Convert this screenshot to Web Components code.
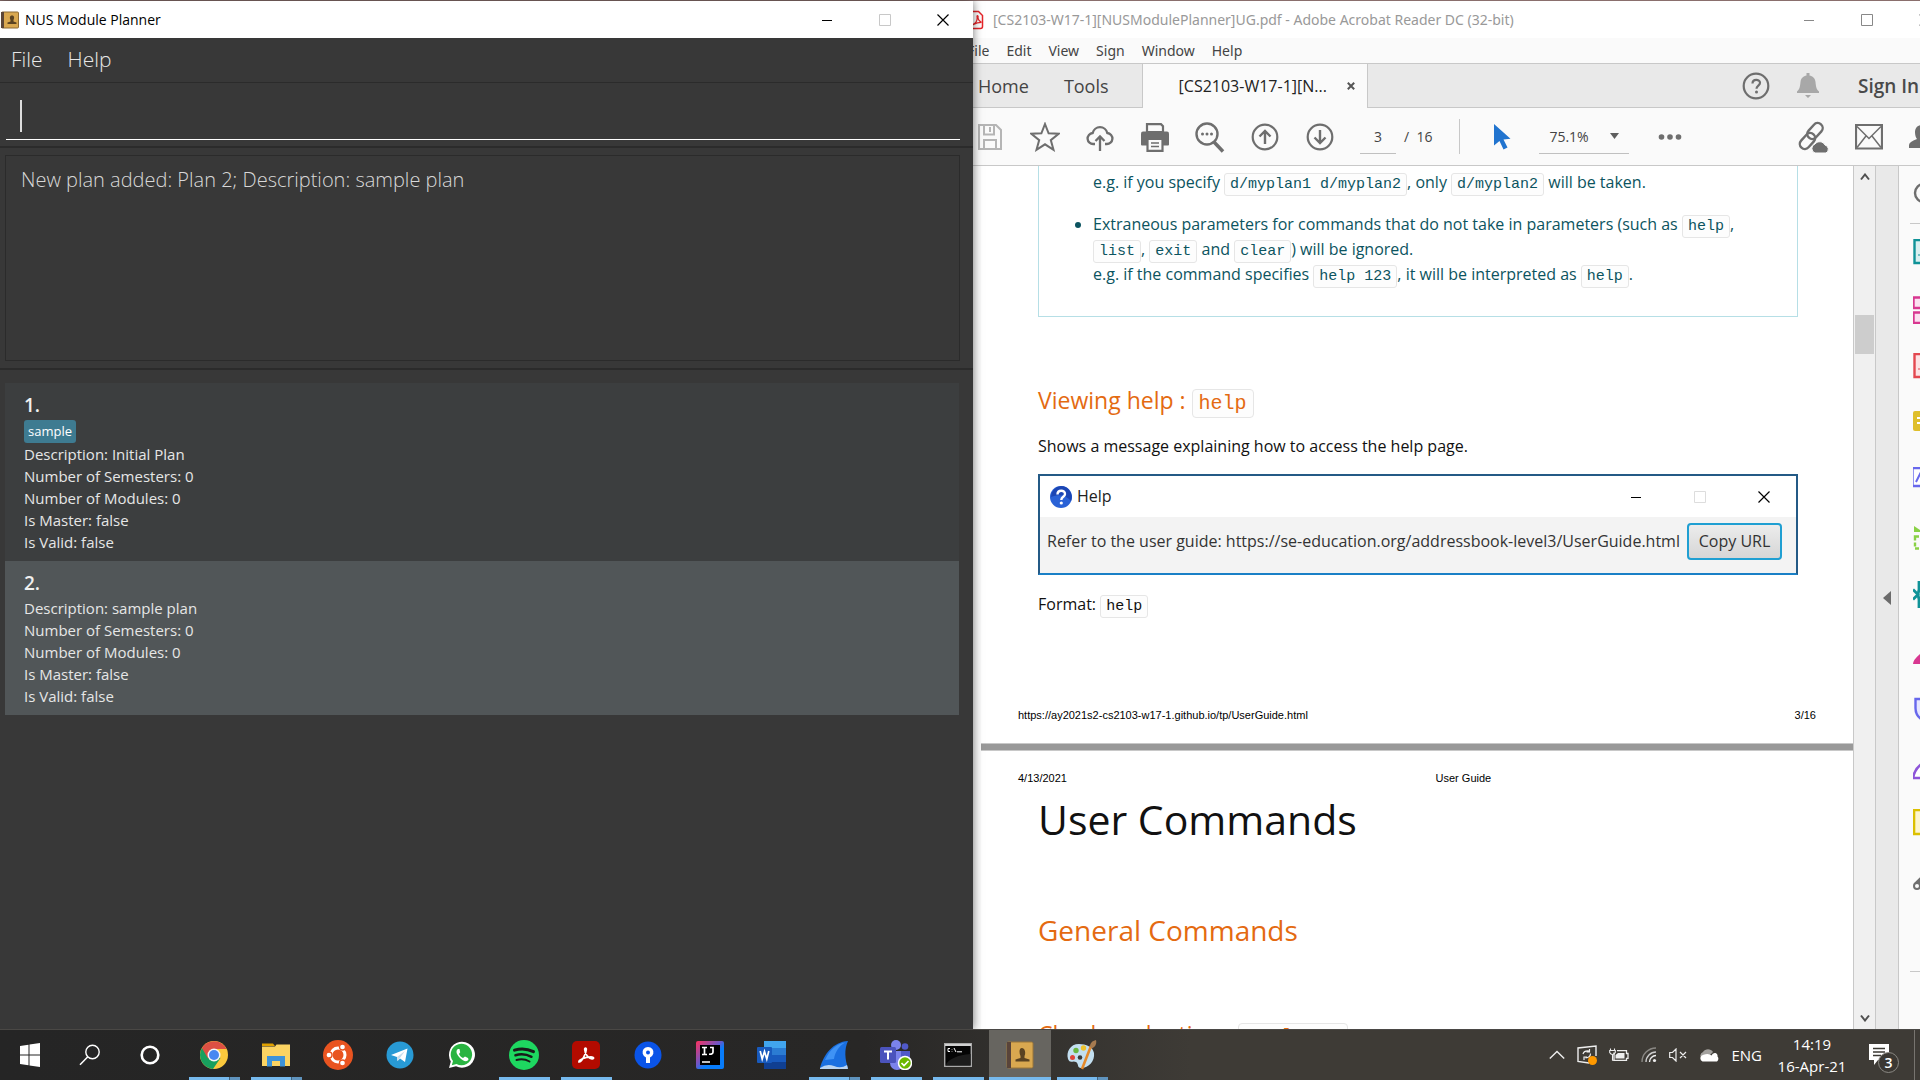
<!DOCTYPE html>
<html lang="en">
<head>
<meta charset="utf-8">
<title>NUS Module Planner</title>
<style>
html,body{margin:0;height:100%;overflow:hidden;background:#383838}
body{font-family:"Open Sans","Noto Sans",sans-serif;font-size:14px}
</style>
</head>
<body>
<desktop-shell>
  <planner-window slot="left">
    <plan-card>
      <span slot="id">1.</span><span slot="tag">sample</span>
      <span>Description: Initial Plan</span><span>Number of Semesters: 0</span><span>Number of Modules: 0</span><span>Is Master: false</span><span>Is Valid: false</span>
    </plan-card>
    <plan-card selected>
      <span slot="id">2.</span>
      <span>Description: sample plan</span><span>Number of Semesters: 0</span><span>Number of Modules: 0</span><span>Is Master: false</span><span>Is Valid: false</span>
    </plan-card>
  </planner-window>
  <pdf-window slot="right"></pdf-window>
  <task-bar slot="bottom"></task-bar>
</desktop-shell>

<script>
const ICONS = {
  book:[18,18,`<rect x=".5" y="1" width="17" height="16" rx="1" fill="#d9a850" stroke="#8c6a35"/><rect y="1" width="3" height="16" fill="#5b4638"/><path d="M6.500 13v-1.500l3-1V9C8.500 7 8.500 4.500 11 4.500S13.500 7 12.500 9v1.500l3 1V13z" fill="#5a4322"/>`],
  min:[12,12,`<path d="M1 6.500h10" stroke="currentColor"/>`],
  max:[12,12,`<path d="M.5.5h11v11H.5z" fill="none" stroke="currentColor"/>`],
  close:[12,12,`<path d="M.5.5l11 11M11.500.5l-11 11" stroke="currentColor" stroke-width="1.200"/>`],
  tabx:[8,8,`<path d="M.8.800l6.400 6.400M7.200.800L.8 7.200" stroke="#555" stroke-width="2"/>`],
  pdf:[20,20,`<path d="M3.500 1.500h10l4 4v11a2 2 0 0 1-2 2h-12a2 2 0 0 1-2-2v-13a2 2 0 0 1 2-2z" fill="#fff" stroke="#e5252a" stroke-width="1.500"/><path d="M8 14.500c3-1.500 4.500-5 4-8 0-1.500 1.500-1 1 .8 0 2 1.500 4 3.500 5-3 0-6 1-8.500 2.400z" fill="none" stroke="#e5252a" stroke-width="1.200"/>`],
  save:[26,28,`<path d="M2 2h17l5 5v19H2z" fill="none" stroke="#b5b5b5" stroke-width="2"/><path d="M7 2v9.500h10V2M7 26v-9h12v9" fill="none" stroke="#b5b5b5" stroke-width="2"/><path d="M13 4v5" stroke="#b5b5b5" stroke-width="2"/>`],
  star:[30,30,`<path d="M15 2l3.600 9.300 10 .5-7.800 6.300 2.700 9.700L15 22.300l-8.500 5.500 2.700-9.700L1.400 11.800l10-.5z" fill="none" stroke="#6e6e6e" stroke-width="2"/>`],
  upcloud:[28,28,`<path d="M9 21H7.500a5.500 5.500 0 0 1-.8-11 7.500 7.500 0 0 1 14.600 0 5.500 5.500 0 0 1-.8 11H19" fill="none" stroke="#6e6e6e" stroke-width="2.300"/><path d="M14 28V14M9.500 18l4.500-4.500 4.500 4.500" fill="none" stroke="#6e6e6e" stroke-width="2.300"/>`],
  print:[28,30,`<path d="M6 2.200h14l2 2V10H6z" fill="#fafafa" stroke="#6e6e6e" stroke-width="2.200"/><path d="M2 9.500h24q2 0 2 2v11q0 1-1 1H1q-1 0-1-1v-11q0-2 2-2z" fill="#6e6e6e"/><path d="M6.500 17h15v11.800h-15z" fill="#fafafa" stroke="#6e6e6e" stroke-width="2.200"/><path d="M10 21h8M10 24.500h8" stroke="#6e6e6e" stroke-width="1.500"/>`],
  find:[30,32,`<circle cx="12" cy="13" r="10.500" fill="none" stroke="#6e6e6e" stroke-width="2.400"/><path d="M19 21l9 9.500" stroke="#6e6e6e" stroke-width="3.500"/><g fill="#6e6e6e"><circle cx="7.500" cy="13" r="1.500"/><circle cx="12" cy="13" r="1.500"/><circle cx="16.500" cy="13" r="1.500"/></g>`],
  up:[28,28,`<circle cx="14" cy="14" r="12.300" fill="none" stroke="#6e6e6e" stroke-width="2.200"/><path d="M14 21V8M8.500 13.500L14 8l5.500 5.500" fill="none" stroke="#6e6e6e" stroke-width="2.400"/>`],
  down:[28,28,`<circle cx="14" cy="14" r="12.300" fill="none" stroke="#6e6e6e" stroke-width="2.200"/><path d="M14 7v13M8.500 14.500L14 20l5.500-5.500" fill="none" stroke="#6e6e6e" stroke-width="2.400"/>`],
  arrow:[18,28,`<path d="M1 1v21.500l5.500-4.500 4 8.500 4-2-4-8 7-.8z" fill="#2174cf"/>`],
  caret:[9,6,`<path d="M0 0h9L4.500 6z" fill="#5e5e5e"/>`],
  dots:[24,8,`<g fill="#6e6e6e"><circle cx="3.500" cy="4" r="2.800"/><circle cx="12" cy="4" r="2.800"/><circle cx="20.500" cy="4" r="2.800"/></g>`],
  link:[32,32,`<g fill="none" stroke="#6e6e6e" stroke-width="2.400"><rect x="-5" y="-9" width="10" height="18" rx="5" transform="translate(18 10) rotate(42)"/><rect x="-5" y="-9" width="10" height="18" rx="5" transform="translate(10.500 20) rotate(42)"/></g><path d="M18 32a4.800 4.800 0 0 1 0-9 6 6 0 0 1 10 1 4.300 4.300 0 0 1 1 8z" fill="#6e6e6e" stroke="#fafafa"/>`],
  mail:[28,26,`<path d="M1 1h26v23.500H1z" fill="none" stroke="#6e6e6e" stroke-width="2.200"/><path d="M2 2.500l12 12 12-12M2 23.500l9-11.500M26 23.500L17 12" fill="none" stroke="#6e6e6e" stroke-width="1.500"/>`],
  person:[26,26,`<path d="M0 24v-3q0-3 8-6c-3-4-3.500-14 5-14s8 10 5 14q8 3 8 6v3z" fill="#6e6e6e"/>`],
  q:[28,28,`<circle cx="14" cy="14" r="12.300" fill="none" stroke="#6e6e6e" stroke-width="2.200"/><path d="M10.500 11.500c0-5 7.500-4.500 7.500-.7 0 3-3.500 2.700-3.500 6" fill="none" stroke="#6e6e6e" stroke-width="2.200"/><circle cx="14.500" cy="20" r="1.500" fill="#6e6e6e"/>`],
  bell:[24,26,`<path d="M1 21v-1.500C4 17 4 14 4.500 10 5 6 7.500 4 10.500 3.500V1h3v2.500c3 .5 5.500 2.500 6 6.500.5 4 .5 7 3.500 9.500V21z M9 23h6l-3 3z" fill="#a8a8a8"/>`],
  helpball:[24,24,`<circle cx="12" cy="12" r="11" fill="#2a62d6"/><path d="M12 1a11 11 0 0 1 10 15c-5-6-12-7-20-4A11 11 0 0 1 12 1z" fill="#1b46b4"/><path d="M8.500 9.500c0-5 7.500-4.800 7.500-.6 0 3-3.700 2.800-3.700 6" fill="none" stroke="#fff" stroke-width="2.400"/><circle cx="12.300" cy="18" r="1.600" fill="#fff"/>`],
  chevup:[10,8,`<path d="M1 6.500l4-5 4 5" fill="none" stroke="#505050" stroke-width="2"/>`],
  chevdown:[10,8,`<path d="M1 1.500l4 5 4-5" fill="none" stroke="#505050" stroke-width="2"/>`],
  tri:[8,14,`<path d="M8 0v14L0 7z" fill="#6b6b6b"/>`],
  /* tool rail */
  r0:[28,28,`<circle cx="11" cy="12" r="9" fill="none" stroke="#6e6e6e" stroke-width="2.400"/>`],
  r1:[28,28,`<path d="M1.500 1h20v23h-20z" fill="#d9f0f0" stroke="#0f9297" stroke-width="2.400"/><path d="M5 16h9" stroke="#0f9297"/>`],
  r2:[28,28,`<path d="M.5 1.500h20v10.500H.5zM.5 16.500h20V27H.5z" fill="#fbe0f0" stroke="#d83790" stroke-width="2.400"/>`],
  r3:[28,28,`<path d="M1.500 1h20v23h-20z" fill="#fde3e5" stroke="#e34850" stroke-width="2.400"/><path d="M5 16h9" stroke="#e34850"/>`],
  r4:[28,28,`<rect x="0" y="1" width="24" height="20" rx="2" fill="#dfbf2b"/><path d="M4 8h12M4 13h12" stroke="#fff" stroke-width="2"/>`],
  r5:[28,28,`<path d="M-.5 1h24v18h-24z" fill="#fff" stroke="#6767ec" stroke-width="2.400"/><path d="M3 15l4-8 4 6" fill="none" stroke="#6767ec" stroke-width="2"/>`],
  r6:[28,28,`<path d="M1 2l9 6H1z" fill="#89d145"/><path d="M2 12.500h20v12H2z" fill="none" stroke="#89d145" stroke-width="2.400" stroke-dasharray="4 2"/>`],
  r7:[28,28,`<path d="M12 1.500H6v7l-1 5 1 5v7h6M0 8.500l5 5-5 5" fill="none" stroke="#0f9297" stroke-width="2.800"/>`],
  r8:[28,28,`<path d="M0 26q0-4 7-10l10-4v14z" fill="#d83790"/>`],
  r9:[28,28,`<path d="M2.500 4h9V26Q2.500 22 2.500 13z" fill="#e6e6ff" stroke="#6767ec" stroke-width="2.400"/>`],
  r10:[28,28,`<path d="M0 26Q2 15 12 10V26z" fill="#fff" stroke="#8e55d9" stroke-width="2.600"/>`],
  r11:[28,28,`<path d="M1 1h20v24H1z" fill="#fdf6cf" stroke="#dcc000" stroke-width="2.600"/>`],
  r12:[28,28,`<path d="M10 11L3 18" stroke="#6e6e6e" stroke-width="4"/><circle cx="4" cy="20" r="3" fill="#fafafa" stroke="#6e6e6e" stroke-width="2"/>`],
  /* taskbar */
  win:[20,24,`<path d="M0 3l8.500-1.200v9.700H0zM9.500 1.600L20 0v11.500H9.500zM0 12.500h8.500v9.700L0 21zM9.500 12.500H20V24L9.500 22.400z" fill="#fff"/>`],
  search:[22,22,`<circle cx="13.500" cy="8" r="6.700" fill="none" stroke="#fff" stroke-width="1.400"/><path d="M8.800 12.800L1 20.800" stroke="#fff" stroke-width="1.500"/>`],
  cortana:[20,20,`<circle cx="10" cy="10" r="8.300" fill="none" stroke="#fff" stroke-width="2.600"/>`],
  chrome:[28,28,`<circle cx="14" cy="14" r="14" fill="#fbc93d"/><path d="M14 14L1.900 7A14 14 0 0 0 13 28l7.500-11z" fill="#18a05e"/><path d="M1.900 7A14 14 0 0 1 26.500 8H14L8 17.500z" fill="#dd5043"/><circle cx="14" cy="14" r="6.500" fill="#f5f5f5"/><circle cx="14" cy="14" r="5" fill="#4688f1"/>`],
  folder:[28,26,`<path d="M0 1.500h11l2 2.500H0z" fill="#e0a100"/><path d="M0 4.500h13l1.500-2H28V24H0z" fill="#fcd462"/><path d="M5 24.500V14h18v10.500h-5V19h-8v5.500z" fill="#3e93d8"/>`],
  ubuntu:[30,30,`<circle cx="15" cy="15" r="15" fill="#e95420"/><circle cx="15" cy="15" r="7" fill="none" stroke="#fff" stroke-width="3"/><g fill="#fff" stroke="#e95420" stroke-width="1.300"><circle cx="6" cy="15" r="3"/><circle cx="19.500" cy="7" r="3"/><circle cx="19.500" cy="23" r="3"/></g>`],
  telegram:[28,28,`<circle cx="14" cy="14" r="13.500" fill="#289ad5"/><path d="M5 14L21.500 7.500 19 21l-5-3.500-2.500 2.500-.5-4z" fill="#fff"/><path d="M11 16l8-6-5.500 7.500-2 2.500z" fill="#c7dceb"/>`],
  whatsapp:[28,28,`<path d="M1 27l1.800-6.600A13 13 0 1 1 8 25.300z" fill="#fff"/><path d="M3.800 24.300l1.200-4.200A10.700 10.700 0 1 1 8.500 23z" fill="#29b441"/><path d="M10 8c-3 2-1 6 2 9s7 4.500 8.500 1.500l-.5-1.500-3-1.500-2 1.500c-2-1-3.500-2.500-4-4l1.200-1.700L11.500 8z" fill="#fff"/>`],
  spotify:[30,30,`<circle cx="15" cy="15" r="15" fill="#1ed760"/><g fill="none" stroke="#191919" stroke-linecap="round"><path d="M5.500 10.200c6-2 13-1.500 19 1.500" stroke-width="3"/><path d="M6.500 15.300c5-1.500 11-1 16 1.500" stroke-width="2.500"/><path d="M7.500 20c4.500-1.200 9-.8 13 1.500" stroke-width="2"/></g>`],
  acrobat:[28,28,`<rect width="28" height="28" rx="5" fill="#b30b00"/><path d="M7 21c-1-2 6-5 12-5.200 3 0 3.500 2.200 1 2-3.500-.5-7-4.500-7.300-9.300-.2-2 1.800-2 1.600 0C14 13 10 20.500 7 21z" fill="none" stroke="#fff" stroke-width="1.700"/>`],
  source:[28,28,`<circle cx="14" cy="14" r="13.500" fill="#0a54e8"/><path d="M12 22v-5.500a5.500 5.500 0 1 1 4 0V22z" fill="#fff"/><circle cx="14" cy="11.500" r="2" fill="#0a54e8"/>`],
  ij:[28,28,`<defs><linearGradient id="g" x2="1" y2="1"><stop offset="0" stop-color="#fe315d"/><stop offset=".45" stop-color="#6b57c8"/><stop offset=".6" stop-color="#087cfa"/></linearGradient></defs><rect width="28" height="28" rx="2" fill="url(#g)"/><rect x="4" y="4" width="20" height="20"/><path d="M6 6.500h5M8.500 6.500v7M6 13.500h5M14 6.500h3V11q0 2.500-4 2.200M6 21h8" fill="none" stroke="#fff" stroke-width="1.700"/>`],
  word:[30,30,`<path d="M7 1h22v7H7z" fill="#41a5ee"/><path d="M7 8h22v7H7z" fill="#2b7cd3"/><path d="M7 15h22v7H7z" fill="#185abd"/><path d="M7 22h22v7H7z" fill="#103f91"/><rect y="7" width="15" height="16" rx="1" fill="#185abd"/><path d="M3.200 11l2 8 2.300-7.500L9.800 19l2-8" fill="none" stroke="#fff" stroke-width="1.700"/>`],
  shark:[30,30,`<path d="M1 28C5 14 14 2 29 1c-4 8-3 19 0 27z" fill="#1a6fe0"/><path d="M6 20C11 9 18 4 26 2.500 20 6 16 12 15 19z" fill="#3f93f5"/><path d="M1 28q7-5 14-2t13-1l1 4H1z" fill="#b9d4f2"/>`],
  teams:[32,30,`<circle cx="16" cy="5" r="5" fill="#7b83eb"/><circle cx="25" cy="6.500" r="3.300" fill="#5059c9"/><path d="M10 11h14v12a7 7 0 0 1-14 0z" fill="#7b83eb"/><path d="M21 11h9v9a5 5 0 0 1-9 3z" fill="#5059c9"/><rect y="7" width="16" height="16" rx="1.500" fill="#4b53bc"/><path d="M4 11.500h8M8 11.500v8" stroke="#fff" stroke-width="2"/><circle cx="25" cy="23" r="6.500" fill="#6bb700" stroke="#fff" stroke-width="1.500"/><path d="M21.500 23l2.500 2.500 4.500-4.500" fill="none" stroke="#fff" stroke-width="1.700"/>`],
  cmd:[28,24,`<path d="M.7.700h26.600v22.600H.7z" fill="#050505" stroke="#a9a9a9" stroke-width="1.400"/><path d="M1 1h26v2H1z" fill="#d0d0d0"/><path d="M6 5.500H4v3h2M8 6v.5M8 8v.5M10 5l2 4M13 8.800h5" fill="none" stroke="#fff"/><path d="M1.500 22.500C4 16 14 12 26.500 11v11.500z" fill="#1c1c1c"/>`],
  bookbig:[28,28,`<rect x="1" y="1" width="26" height="26" rx="1.500" fill="#d9a850" stroke="#9b7638"/><rect x="1" y="1" width="4" height="26" fill="#59443a"/><path d="M9.500 20.500v-2l5-1.500v-2C13 12 13 7 16 7s4 5 2.500 8v2l5 1.500v2z" fill="#5a4322"/>`],
  paint:[32,32,`<path d="M13 5C4 5 0 13 2 20c2 5 5 1 8 3s1 6 5 6c8 0 14-7 13-15-1-6-8-9-15-9z" fill="#c3dff0"/><circle cx="6.500" cy="18.500" r="2.500" fill="#e0433a"/><circle cx="10" cy="11.500" r="2.700" fill="#69b540"/><circle cx="17.500" cy="9" r="2.700" fill="#efc32d"/><circle cx="14" cy="18.500" r="2.300" fill="#3a3a3a"/><path d="M16 30l9-23" stroke="#e58a2b" stroke-width="2.600"/><path d="M24 8c0-4 2-6 6-7 1 4-1 7-4 8.500z" fill="#a57a50"/>`],
  traychev:[16,10,`<path d="M.8 8.500L8 1.500l7.200 7" fill="none" stroke="#eee" stroke-width="1.400"/>`],
  update:[20,20,`<path d="M12 18L1 16.500V3l18-2v10" fill="none" stroke="#eee" stroke-width="1.400"/><path d="M6 9q1-3.500 6-3M12.500 4v3h-3M13.500 8.500q0 4-5 4.500M7 15v-3h3" fill="none" stroke="#eee" stroke-width="1.200"/><circle cx="15.500" cy="15.500" r="4.500" fill="#f90"/>`],
  battery:[20,14,`<path d="M5 4.500V12.300h12.500v-2h1.500V5.500h-1.500V2.700H8" fill="none" stroke="#eee" stroke-width="1.300"/><path d="M9 5h6.500v5.500H6.500V7z" fill="#eee"/><path d="M1.500.5v2M5.500.5v2M.7 2.500h5.600v2q-1 2-2.800 2T.7 4.500zM3.500 6v6.300H5" fill="none" stroke="#eee" stroke-width="1.100"/>`],
  wifi:[16,16,`<g fill="none" stroke-width="1.400"><path d="M1 15A14 14 0 0 1 15 1" stroke="#8a8884"/><path d="M5 15A10 10 0 0 1 15 5" stroke="#ccc"/><path d="M8.500 15A6.500 6.500 0 0 1 15 8.500" stroke="#eee"/></g><circle cx="13.500" cy="13.500" r="1.600" fill="#eee"/>`],
  mute:[18,14,`<path d="M.7 4.500h2.800L7 1v12L3.500 9.500H.7zM11 4l6 6M17 4l-6 6" fill="none" stroke="#eee" stroke-width="1.200"/>`],
  cloud:[20,14,`<path d="M3 11a4 4 0 0 1 1-7 6 6 0 0 1 10 0l-7 7z" fill="#a3a19e"/><path d="M3.500 13.500a3.500 3.500 0 0 1 1-6.700q5-2 8 .7 1-3 4-2.500 2.500 1 2 3.500 2 2.500-.5 5z" fill="#fff"/>`],
  note:[20,22,`<path d="M0 0h20v16H9l-4 5v-5H0z" fill="#fff"/><path d="M4 4.500h12M4 8h12M4 11.500h8" stroke="#3b3833" stroke-width="1.300"/>`]
};

class UiIcon extends HTMLElement {
  connectedCallback() {
    if (this.shadowRoot) return;
    const [w, h, body] = ICONS[this.getAttribute('name')];
    this.attachShadow({mode:'open'}).innerHTML =
      `<style>:host{display:inline-block;flex:none;width:${w}px;height:${h}px}svg{display:block}</style>
       <svg width="${w}" height="${h}" viewBox="0 0 ${w} ${h}" aria-hidden="true">${body}</svg>`;
  }
}

function define(name, html, after) {
  const tpl = document.createElement('template');
  tpl.innerHTML = html;
  customElements.define(name, class extends HTMLElement {
    constructor() {
      super();
      this.attachShadow({mode:'open'}).append(tpl.content.cloneNode(true));
      if (after) after(this.shadowRoot, this);
    }
  });
}
const BTN = `button{font:inherit;color:inherit;background:none;border:0;margin:0;padding:0;display:flex;align-items:center;justify-content:center}*{box-sizing:border-box}`;

customElements.define('ui-icon', UiIcon);

define('desktop-shell', `<style>
:host{display:grid;height:100vh;grid-template:minmax(0,1fr) 51px / minmax(0,973fr) minmax(0,947fr);background:#8a6f6d}
::slotted([slot=left]){margin-top:1px;z-index:1}
::slotted([slot=right]){margin-top:1px}
::slotted([slot=bottom]){grid-column:1/-1;z-index:2}
</style><slot name="left"></slot><slot name="right"></slot><slot name="bottom"></slot>`);

define('window-buttons', `<style>${BTN}
:host{display:flex;color:#000;--off:#c8c8c8}
button{width:var(--step,58px);height:100%}
.off{color:var(--off)}
</style><button aria-label="Minimize"><ui-icon name="min"></ui-icon></button><button class="off" aria-label="Maximize"><ui-icon name="max"></ui-icon></button><button aria-label="Close"><ui-icon name="close"></ui-icon></button>`);

define('planner-window', `<style>${BTN}
:host{display:flex;flex-direction:column;background:#383838;box-shadow:0 0 9px rgba(0,0,0,.55);min-width:0}
header{display:flex;height:37px;background:#fff;align-items:center;padding:0 1px;color:#000}
h1{flex:1;margin:0 0 0 6px;font-size:14px;font-weight:400;line-height:20px}
window-buttons{height:100%}
nav{display:flex;height:45px;padding:0 11px;gap:25px;border-bottom:1px solid #2b2b2b;color:#e8e8e8;font-weight:300;font-size:21px;line-height:40px}
nav button{height:42px}
.cmd{padding:13px 13px 6px 6px;border-bottom:2px solid #2b2b2b}
.field{display:flex;align-items:center;height:44px;padding:0 14px 4px;border-bottom:1px solid #fff}
.caret{width:2px;height:32px;background:#ddd}
input{flex:1;border:0;outline:0;background:none;color:#fff;font:300 21px "Open Sans",sans-serif;min-width:0}
.result{height:222px;padding:7px 13px 7px 5px;border-bottom:2px solid #2b2b2b}
.result p{margin:0;height:100%;border:1px solid #2b2b2b;padding:9px 15px;color:#d8d8d8;font-weight:300;font-size:20px;line-height:30px}
.list{display:flex;flex-direction:column;padding:13px 14px 0 5px}
</style>
<header><ui-icon name="book"></ui-icon><h1>NUS Module Planner</h1><window-buttons></window-buttons></header>
<nav><button>File</button><button>Help</button></nav>
<div class="cmd"><div class="field"><span class="caret"></span><input aria-label="Command"></div></div>
<div class="result"><p>New plan added: Plan 2; Description: sample plan</p></div>
<div class="list"><slot></slot></div>`);

define('plan-card', `<style>
:host{display:flex;flex-direction:column;align-items:flex-start;padding:9px 19px 8px;background:#3c3e3f;color:#e6e6e6;font-size:15px;line-height:22px}
:host([selected]){background:#515658}
.id{font-size:19px;line-height:27px;font-weight:600;color:#f0f0f0}
.tag{display:block}
.tag ::slotted(*){display:block;margin-top:1px;padding:0 4px;border-radius:3px;background:#3e7b91;color:#fff;font-size:13px;line-height:23px}
::slotted(:not([slot])){display:block}
</style><div class="id"><slot name="id"></slot></div><div class="tag"><slot name="tag"></slot></div><slot></slot>`);

define('code-chip', `<style>
:host{display:inline-block;margin:-4px 0;border:1px solid #e6e6e6;border-radius:3px;background:#fdfdfd;padding:0 5px;font-family:"Liberation Mono",monospace;font-size:15px;line-height:21px}
:host([large]){font-size:20px;line-height:27px;padding:0 6px;border-radius:4px}
</style><slot></slot>`);

define('help-dialog', `<style>${BTN}
:host{display:flex;flex-direction:column;height:101px;box-sizing:border-box;border:2px solid #245a86;border-bottom-color:#1a80c6;background:#f3f3f3;color:#333}
header{display:flex;align-items:center;height:41px;padding:0 0 0 9px;background:#fff;color:#222}
h4{flex:1;margin:0 0 0 4px;font-weight:400;font-size:16px}
window-buttons{--step:64px;height:100%;--off:#ddd}
div{display:flex;align-items:center;justify-content:space-between;padding:6px 14px 0 7px;font-size:16px}
div button{flex:none;width:95px;height:37px;border:2px solid #1f9fd2;border-radius:4px;background:linear-gradient(#ececec,#d6d6d6);white-space:nowrap}
span{white-space:nowrap}
</style><header><ui-icon name="helpball"></ui-icon><h4>Help</h4><window-buttons></window-buttons></header>
<div><span>Refer to the user guide: https://se-education.org/addressbook-level3/UserGuide.html</span><button>Copy URL</button></div>`);

define('tool-rail', `<style>${BTN}
:host{display:flex;flex-direction:column;width:22px;overflow:hidden;background:#fafafa;box-sizing:border-box;border-left:1px solid #c8c8c8}
button{height:57px;flex:none;justify-content:flex-start;padding-left:14px}
hr{width:100%;flex:none;margin:0 0 0 11px;border:0;border-top:1px solid #c8c8c8}
.sp{height:63px;flex:none}
</style>`, root => {
  const names = ['Search tools','Export PDF','Organize','Create PDF','Comment','Request','Scan','Compress','Fill and sign','Protect','Certificates','Sticky','More tools'];
  names.forEach((n, i) => {
    const b = document.createElement('button');
    b.setAttribute('aria-label', n);
    const ic = document.createElement('ui-icon');
    ic.setAttribute('name', 'r' + i);
    b.append(ic); root.append(b);
    if (i === 0) root.append(document.createElement('hr'));
  });
  const sp = document.createElement('span'); sp.className = 'sp';
  root.append(sp, document.createElement('hr'));
});

define('pdf-document', `<style>
:host{display:block;overflow:hidden;color:#111;font-size:16px;line-height:25px;background:#fff;min-width:0}
section{background:#fff;padding:0 55px 0 57px}
.p3{padding-bottom:21px;border-bottom:1px solid #c8c8c8}
.gap{height:6px;background:#999}
.p4{border-top:1px solid #c8c8c8;padding-top:20px}
.info{border:1px solid #b6dfe6;border-top:0;padding:4px 40px 29px 54px;color:#0c5460}
ul{margin:0;padding:0}
li{margin:0 0 17px}
li:last-child{margin:0}
li:first-child{list-style:none}
h1,h2,h3,p{margin:0;font-weight:400}
h3{color:#e46a11;font-size:23px;line-height:30px;margin-top:68px;white-space:nowrap}
h1{font-size:41px;line-height:60px;margin-top:4px}
h2{color:#e46a11;font-size:28px;line-height:41px;margin-top:61px}
.lead{margin-top:19px}
help-dialog{margin-top:15px}
.fmt{margin-top:17px}
.run{display:grid;grid-template-columns:9fr auto 7fr;margin:0 -18px 0 -20px;font:11px/14px "Liberation Sans",sans-serif;color:#000}
.run :last-child{text-align:right}
.foot{margin-top:91px}
a{color:inherit;text-decoration:none}
</style>
<section class="p3">
<div class="info"><ul><li>e.g. if you specify <code-chip>d/myplan1 d/myplan2</code-chip>, only <code-chip>d/myplan2</code-chip> will be taken.</li>
<li>Extraneous parameters for commands that do not take in parameters (such as <code-chip>help</code-chip>,<br><code-chip>list</code-chip>, <code-chip>exit</code-chip> and <code-chip>clear</code-chip>) will be ignored.<br>e.g. if the command specifies <code-chip>help 123</code-chip>, it will be interpreted as <code-chip>help</code-chip>.</li></ul></div>
<h3>Viewing help : <code-chip large>help</code-chip></h3>
<p class="lead">Shows a message explaining how to access the help page.</p>
<help-dialog></help-dialog>
<p class="fmt">Format: <code-chip>help</code-chip></p>
<div class="run foot"><a href="#">https://ay2021s2-cs2103-w17-1.github.io/tp/UserGuide.html</a><span></span><span>3/16</span></div>
</section>
<div class="gap"></div>
<section class="p4">
<div class="run"><span>4/13/2021</span><span>User Guide</span><span></span></div>
<h1>User Commands</h1>
<h2>General Commands</h2>
<h3>Check evaluation : <code-chip large>evaluate</code-chip></h3>
</section>`);

define('pdf-window', `<style>${BTN}
:host{display:flex;flex-direction:column;background:#fafafa;overflow:hidden;min-width:0;color:#444}
header{display:flex;height:37px;flex:none;background:#fff;align-items:center;color:#999;margin-right:-34px}
header ui-icon{margin-left:-8px}
h1{flex:1;margin:0 0 0 8px;font-size:14px;font-weight:400;white-space:nowrap}
h1,nav{font-family:"Noto Sans",sans-serif}
window-buttons{color:#888;--off:#888;height:100%}
nav{display:flex;flex:none;height:25px;gap:17px;margin-left:-6px;font-size:14px;color:#444}
.tabs{display:flex;flex:none;height:45px;background:#e9e9e9;border:1px solid #c8c8c8;border-width:1px 0;font-size:18px;align-items:center}
.tabs>button{padding:0 5px}
.tabs .tools{margin-left:25px}
.tab{display:flex;align-items:center;justify-content:space-between;height:44px;width:226px;margin:0 0 -1px 28px;padding:0 12px 0 36px;border:1px solid #c8c8c8;border-width:0 1px;background:#fafafa;font-size:16px;color:#222}
.acct{display:flex;align-items:center;gap:38px;margin-left:auto;white-space:nowrap}
.acct b{width:62px;font-weight:600;font-size:19px;line-height:24px;color:#4a4a4a}
.acct span{display:flex;gap:26px}
.bar{display:flex;flex:none;align-items:center;height:58px;border-bottom:1px solid #c8c8c8;padding-left:3px;font-size:14px;color:#444}
.bar .t{display:flex;width:55px;justify-content:center;flex:none}
.tset{display:flex;margin-left:-14px}
.page{display:flex;align-items:center;margin-left:13px;gap:8px}
input{width:36px;height:34px;border:0;border-bottom:1px solid #c0c0c0;background:none;text-align:center;font:inherit;color:inherit;padding:0}
.vr{width:1px;height:35px;background:#c8c8c8;margin-left:27px}
.arrow{margin-left:33px}
.zoom{display:flex;align-items:center;justify-content:space-between;width:90px;height:34px;margin-left:28px;padding:0 10px;border-bottom:1px solid #c0c0c0}
select{appearance:none;border:0;background:none;font:inherit;color:inherit;padding:0;flex:1}
.dots{margin-left:29px}
.share{display:flex;align-items:center;gap:26px;margin-left:auto;margin-right:-15px}
.body{display:flex;flex:1;min-height:0}
pdf-document{flex:1;margin-left:8px;border-right:1px solid #c8c8c8}
.scroll{display:flex;flex-direction:column;align-items:center;width:22px;background:#f0f0f0;border-right:1px solid #c8c8c8;padding:7px 0}
.thumb{width:19px;height:39px;background:#cdcdcd;margin-top:134px}
.scroll ui-icon:last-child{margin-top:auto}
.side{display:flex;align-items:center;justify-content:center;width:22px;background:#e9e9e9}
</style>
<header><ui-icon name="pdf"></ui-icon><h1>[CS2103-W17-1][NUSModulePlanner]UG.pdf - Adobe Acrobat Reader DC (32-bit)</h1><window-buttons></window-buttons></header>
<nav><button>File</button><button>Edit</button><button>View</button><button>Sign</button><button>Window</button><button>Help</button></nav>
<div class="tabs"><button>Home</button><button class="tools">Tools</button><div class="tab"><span>[CS2103-W17-1][N...</span><ui-icon name="tabx"></ui-icon></div>
<div class="acct"><span><ui-icon name="q"></ui-icon><ui-icon name="bell"></ui-icon></span><b>Sign In</b></div></div>
<div class="bar"><div class="tset">
<button class="t" aria-label="Save"><ui-icon name="save"></ui-icon></button><button class="t" aria-label="Star"><ui-icon name="star"></ui-icon></button><button class="t" aria-label="Upload"><ui-icon name="upcloud"></ui-icon></button><button class="t" aria-label="Print"><ui-icon name="print"></ui-icon></button><button class="t" aria-label="Find"><ui-icon name="find"></ui-icon></button><button class="t" aria-label="Previous page"><ui-icon name="up"></ui-icon></button><button class="t" aria-label="Next page"><ui-icon name="down"></ui-icon></button></div>
<div class="page"><input aria-label="Page" value="3"><span>/&nbsp; 16</span></div><span class="vr"></span>
<button class="arrow" aria-label="Select"><ui-icon name="arrow"></ui-icon></button>
<label class="zoom"><select aria-label="Zoom"><option>75.1%</option></select><ui-icon name="caret"></ui-icon></label>
<button class="dots" aria-label="More"><ui-icon name="dots"></ui-icon></button>
<div class="share"><ui-icon name="link"></ui-icon><ui-icon name="mail"></ui-icon><ui-icon name="person"></ui-icon></div></div>
<div class="body"><pdf-document></pdf-document><div class="scroll"><ui-icon name="chevup"></ui-icon><span class="thumb"></span><ui-icon name="chevdown"></ui-icon></div><div class="side"><ui-icon name="tri"></ui-icon></div><tool-rail></tool-rail></div>`);

define('task-button', `<style>${BTN}
:host{display:flex;width:62px;height:100%;flex:none;position:relative}
:host([shell]){width:60px}
button{width:100%;height:100%}
:host([open])::after{content:"";position:absolute;left:6px;right:5px;bottom:0;height:3px;background:#76b9ed}
:host([many])::after{background:linear-gradient(90deg,#76b9ed 40px,#41627b 40px,#41627b 41px,#5f93bd 41px)}
:host([active]){background:#676560}
:host([active])::after{left:0;right:0}
</style><button><slot></slot></button>`);

define('task-bar', `<style>${BTN}
:host{display:flex;align-items:stretch;background:linear-gradient(90deg,#252525,#282726 45%,#3e3b36 62%,#3e3b36);border-top:1px solid #4a4845;color:#fff;font-size:15px}
task-button:nth-of-type(4){margin-left:3px}
.tray{display:flex;align-items:center;margin-left:auto;white-space:nowrap}
.tray>ui-icon{margin-right:12px}
time{display:block;text-align:center;font-size:15px;line-height:22px}
.clock{display:flex;justify-content:center;width:74px;margin-left:13px}
.note{position:relative;display:flex;margin-left:20px;width:30px}
.badge{position:absolute;left:9px;top:8px;width:21px;height:21px;border-radius:50%;border:1px solid #8b8984;background:#3b3833;font-size:14px;line-height:19px;font-weight:600;text-align:center}
.show{width:6px;height:50px;border-left:1px solid #77746f;margin-left:15px}
</style>
<task-button shell><ui-icon name="win"></ui-icon></task-button><task-button shell><ui-icon name="search"></ui-icon></task-button><task-button shell><ui-icon name="cortana"></ui-icon></task-button><task-button open many><ui-icon name="chrome"></ui-icon></task-button><task-button open many><ui-icon name="folder"></ui-icon></task-button><task-button><ui-icon name="ubuntu"></ui-icon></task-button><task-button><ui-icon name="telegram"></ui-icon></task-button><task-button><ui-icon name="whatsapp"></ui-icon></task-button><task-button open><ui-icon name="spotify"></ui-icon></task-button><task-button open><ui-icon name="acrobat"></ui-icon></task-button><task-button><ui-icon name="source"></ui-icon></task-button><task-button><ui-icon name="ij"></ui-icon></task-button><task-button><ui-icon name="word"></ui-icon></task-button><task-button open many><ui-icon name="shark"></ui-icon></task-button><task-button open><ui-icon name="teams"></ui-icon></task-button><task-button open><ui-icon name="cmd"></ui-icon></task-button><task-button open active><ui-icon name="bookbig"></ui-icon></task-button><task-button open many><ui-icon name="paint"></ui-icon></task-button>
<div class="tray"><ui-icon name="traychev"></ui-icon><ui-icon name="update"></ui-icon><ui-icon name="battery"></ui-icon><ui-icon name="wifi"></ui-icon><ui-icon name="mute"></ui-icon><ui-icon name="cloud"></ui-icon><span>ENG</span>
<div class="clock"><time>14:19<br>16-Apr-21</time></div><div class="note"><ui-icon name="note"></ui-icon><span class="badge">3</span></div><span class="show"></span></div>`);
</script>
</body>
</html>
